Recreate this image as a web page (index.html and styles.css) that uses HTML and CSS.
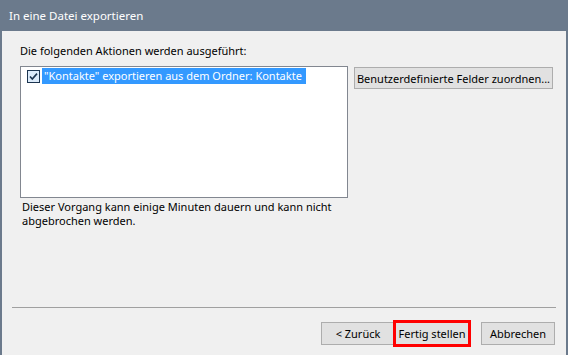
FILE: index.html
```html
<!DOCTYPE html>
<html lang="de">
<head>
    <meta charset="UTF-8">
    <title>In eine Datei exportieren</title>
    <link rel="stylesheet" href="styles.css">
</head>
<body>
    <div class="window">
        <div class="title-bar">In eine Datei exportieren</div>

        <div class="content">
            <p class="label">Die folgenden Aktionen werden ausgeführt:</p>

            <div class="action-row">
                <div class="list-box">
                    <div class="list-item">
                        <svg class="check" width="13" height="13" viewBox="0 0 13 13">
                            <rect x="0.5" y="0.5" width="12" height="12" fill="#dcebfa" stroke="#1c3550"/>
                            <path d="M3 6.5 L5.3 9 L10 3.6" fill="none" stroke="#1c3550" stroke-width="1.6"/>
                        </svg>
                        <span class="item-text">"Kontakte" exportieren aus dem Ordner: Kontakte</span>
                    </div>
                </div>
                <button class="btn map-btn">Benutzerdefinierte Felder zuordnen...</button>
            </div>

            <p class="note">Dieser Vorgang kann einige Minuten dauern und kann nicht<br>abgebrochen werden.</p>
        </div>

        <div class="separator"></div>

        <div class="footer">
            <button class="btn wide">&lt; Zurück</button>
            <button class="btn wide finish">Fertig stellen</button>
            <button class="btn wide cancel">Abbrechen</button>
        </div>
    </div>
</body>
</html>
```

FILE: styles.css
```css
body { margin: 0; font-family: "Noto Sans", "Open Sans", sans-serif; font-size: 11px; color: #000; background: #f0f0f0; }
.window { height: 355px; box-sizing: border-box; display: flex; flex-direction: column; background: #f0f0f0; border-left: 2px solid #6b7a8c; border-right: 2px solid #6b7a8c; }
.title-bar { height: 31px; display: flex; align-items: center; margin: 0 -2px; padding-left: 9px; background: #6b7a8c; color: #fff; font-size: 11.5px; }
.content { flex: 1; padding: 0 10px 0 18px; }
.label { margin: 12px 0 8px 0; line-height: 15px; }
.action-row { display: flex; align-items: flex-start; gap: 6px; }
.list-box { width: 328px; height: 132px; box-sizing: border-box; border: 1px solid #828790; background: #fff; padding: 1px 0 0 6px; }
.list-item { display: flex; align-items: center; gap: 2px; height: 16px; }
.check { display: block; flex: none; }
.item-text { background: #3399ff; color: #fff; line-height: 16px; padding: 0 4px 0 2px; white-space: nowrap; }
.btn { font-family: inherit; font-size: 11px; color: #000; background: #e1e1e1; border: 1px solid #adadad; border-radius: 0; padding: 0 6px; height: 22px; white-space: nowrap; cursor: pointer; }
.map-btn { margin-top: 1px; width: 199px; padding: 0; }
.note { margin: 2px 0 0 2px; line-height: 14px; }
.separator { height: 1px; background: #a0a0a0; margin: 0 10px 14px 10px; }
.footer { display: flex; justify-content: flex-end; padding: 0 11px 10px 0; }
.wide { width: 74px; height: 23px; padding: 0; }
.finish { outline: 3px solid #f00; outline-offset: -1px; }
.cancel { margin-left: 12px; }
```
